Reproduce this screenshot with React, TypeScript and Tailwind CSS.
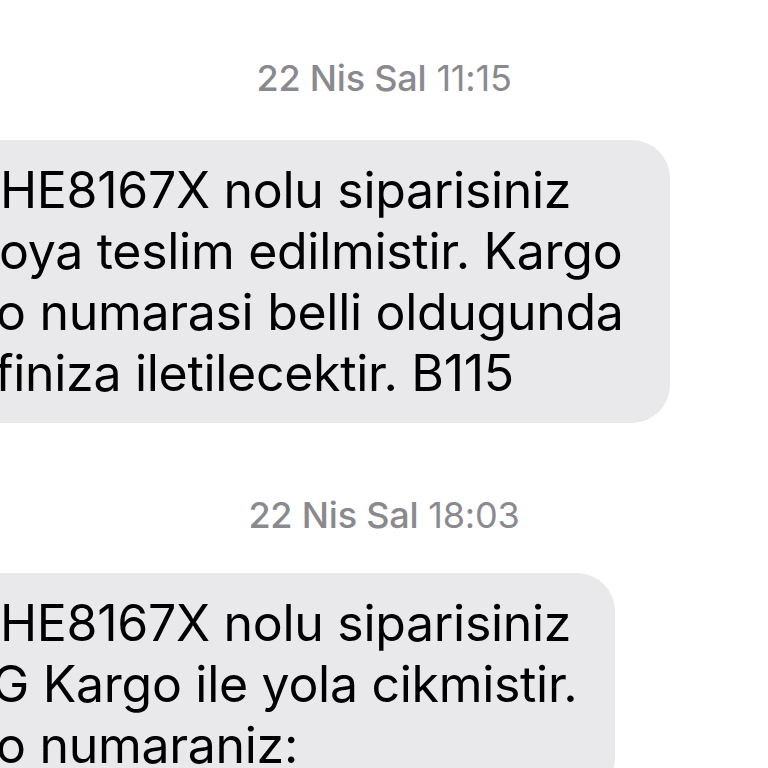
import React from 'react';

const first = [
  { text: 'HE8167X nolu siparisiniz', cls: 'ml-0' },
  { text: 'oya teslim edilmistir. Kargo', cls: 'ml-[-1px]' },
  { text: 'o numarasi belli oldugunda', cls: 'ml-[-4px]' },
  { text: 'finiza iletilecektir. B115', cls: 'ml-[-5px]' },
];

const second = [
  { text: 'HE8167X nolu siparisiniz', cls: 'ml-0' },
  { text: 'G Kargo ile yola cikmistir.', cls: 'ml-[-8px]' },
  { text: 'o numaraniz:', cls: 'ml-[-4px]' },
];

function Stamp({ day, time }: { day: string; time: string }) {
  return (
    <div className="text-center text-[36px] leading-[40px] text-[#8a8a8e] tracking-[-0.2px]">
      <span className="font-medium">{day}</span> <span>{time}</span>
    </div>
  );
}

function Bubble({ lines, width }: { lines: { text: string; cls: string }[]; width: string }) {
  return (
    <div className={`ml-[-40px] ${width} rounded-[38px] bg-[#e9e9eb] pl-[40px] pt-[20px] pb-[19px] overflow-hidden`}>
      {lines.map((l, i) => (
        <div key={i} className={`whitespace-nowrap text-[50px] leading-[61px] text-black tracking-[-0.3px] ${l.cls}`}>
          {l.text}
        </div>
      ))}
    </div>
  );
}

export default function App() {
  return (
    <div className="w-[768px] h-[768px] overflow-hidden bg-white font-['Inter',sans-serif]">
      <div className="pt-[58px]">
        <Stamp day="22 Nis Sal" time="11:15" />
      </div>
      <div className="mt-[42px]">
        <Bubble lines={first} width="w-[710px]" />
      </div>
      <div className="mt-[72px]">
        <Stamp day="22 Nis Sal" time="18:03" />
      </div>
      <div className="mt-[38px]">
        <Bubble lines={second} width="w-[655px]" />
      </div>
    </div>
  );
}
